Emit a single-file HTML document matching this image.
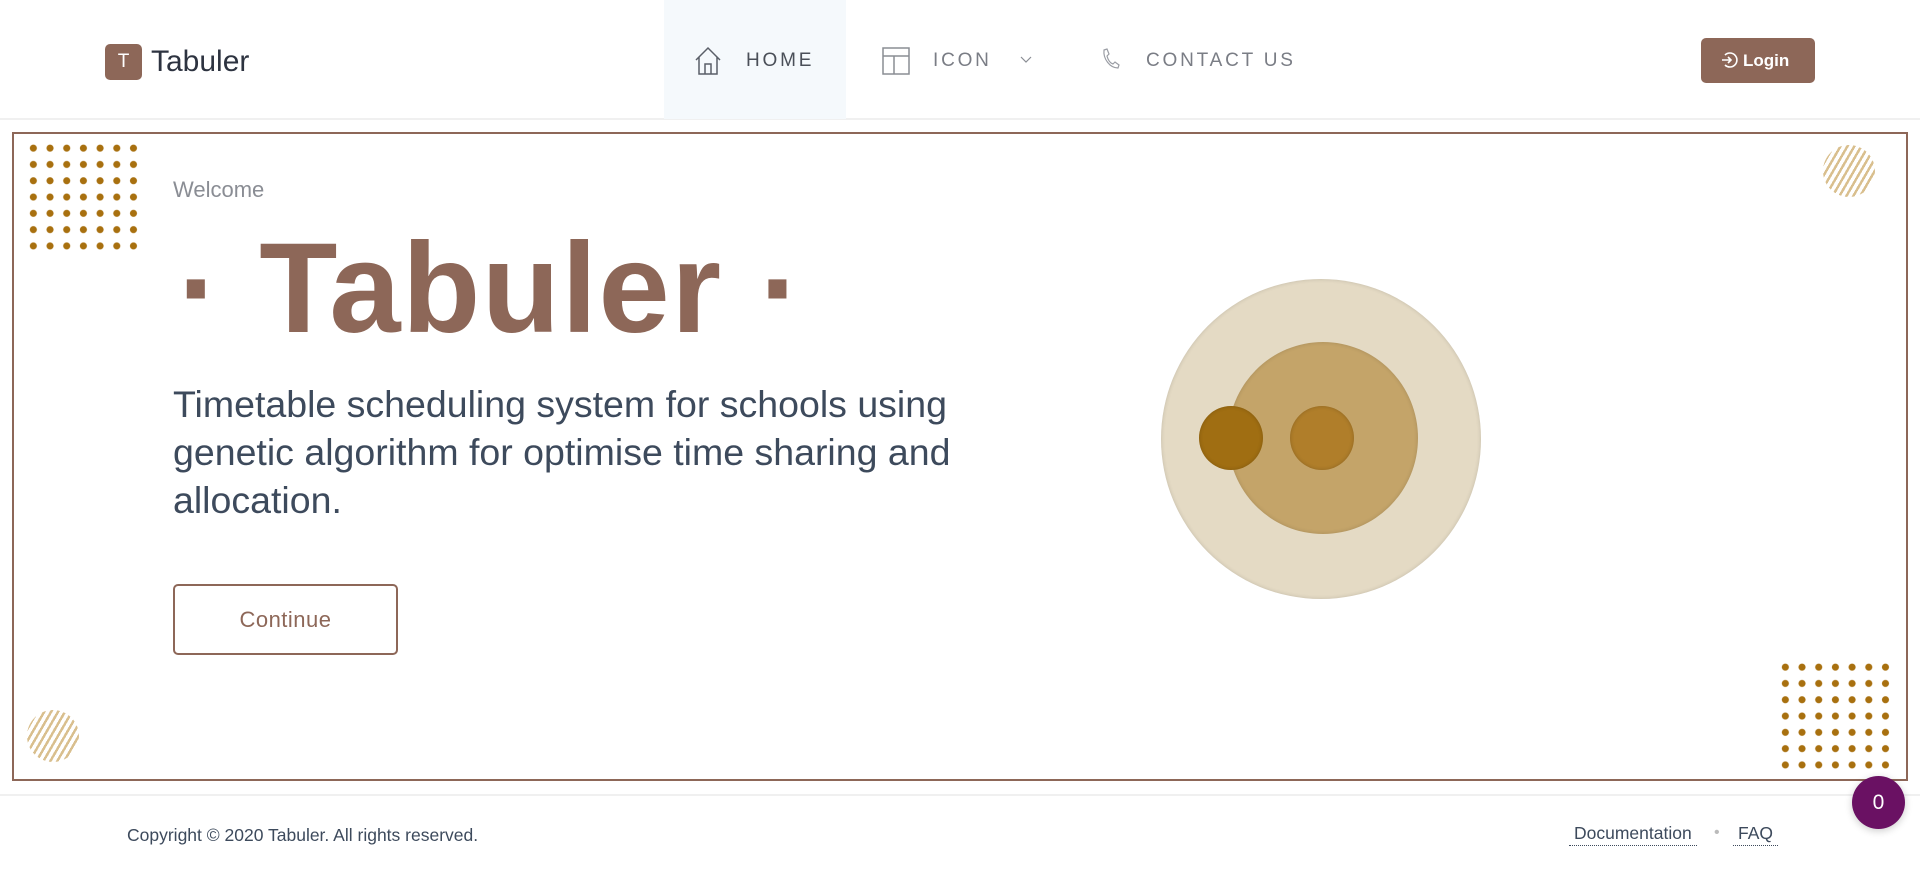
<!DOCTYPE html>
<html><head><meta charset="utf-8">
<style>
*{margin:0;padding:0;box-sizing:border-box}
body{width:1920px;height:877px;background:#fff;font-family:"Liberation Sans",sans-serif;position:relative;overflow:hidden}
.abs{position:absolute}
.hdr{left:0;top:0;width:1920px;height:120px;border-bottom:2px solid #f0f0f0}
.logo{left:105px;top:44px;width:37px;height:36px;background:#8d6758;border-radius:5px;color:#fff;font-size:19px;text-align:center;line-height:36px}
.brand{left:151px;top:44px;font-size:30px;color:#2d3340;line-height:36px}
.nav{font-size:19px;letter-spacing:2.8px;color:#7a7d85;top:49px;line-height:24px}
.home{left:664px;top:0;width:182px;height:119px;background:#f5f9fc}
.login{left:1701px;top:38px;width:114px;height:45px;background:#8d6758;border-radius:5px}
.hero{left:12px;top:132px;width:1896px;height:649px;border:2px solid #8d6758}
.dots{background-image:radial-gradient(circle,#a8700f 3.2px,transparent 3.8px);background-size:16.7px 16.3px}
.hatch{border-radius:50%;background:repeating-linear-gradient(-60deg,#d9bf8e 0 2.5px,transparent 2.5px 6px)}
.circ{border-radius:50%}
</style></head><body>
<div class="abs hdr"></div>
<div class="abs logo">T</div>
<div class="abs brand">Tabuler</div>
<div class="abs home"></div>
<svg class="abs" style="left:694px;top:46px" width="28" height="30" viewBox="0 0 28 30" fill="none" stroke="#5a5f68" stroke-width="1.5"><path d="M2 14 L14 2 L26 14 M5 11 V28 H23 V11 M11 28 V18 H17 V28"/></svg>
<div class="abs nav" style="left:746px;color:#4a4f58">HOME</div>
<svg class="abs" style="left:882px;top:47px" width="28" height="28" viewBox="0 0 28 28" fill="none" stroke="#8a8d94" stroke-width="1.5"><rect x="1" y="1" width="26" height="26"/><path d="M1 9 H27 M12 9 V27"/></svg>
<div class="abs nav" style="left:933px">ICON</div>
<svg class="abs" style="left:1020px;top:56px" width="12" height="8" viewBox="0 0 12 8" fill="none" stroke="#8a8d94" stroke-width="1.2"><path d="M1 1 L6 6 L11 1"/></svg>
<svg class="abs" style="left:1100px;top:48px" width="20" height="22" viewBox="0 0 20 22" fill="none" stroke="#9a9da4" stroke-width="1.2"><path d="M4 2 L7 1 L9 6 L7 8 C8 12 10 15 13 16 L15 14 L19 17 L18 20 C10 20 3 11 4 2Z"/></svg>
<div class="abs nav" style="left:1146px">CONTACT US</div>
<div class="abs login"></div>
<svg class="abs" style="left:1720px;top:51px" width="18" height="18" viewBox="0 0 18 18" fill="none" stroke="#fff" stroke-width="1.6"><path d="M5 4 A7 7 0 1 1 5 14"/><path d="M2 9 H11 M8 6 L11 9 L8 12"/></svg>
<div class="abs" style="left:1743px;top:38px;line-height:45px;color:#fff;font-size:17px;font-weight:bold">Login</div>

<div class="abs hero"></div>
<div class="abs dots" style="left:25px;top:140px;width:117px;height:114px"></div>
<div class="abs dots" style="left:1777px;top:659px;width:117px;height:114px"></div>
<div class="abs hatch" style="left:1823px;top:145px;width:52px;height:52px"></div>
<div class="abs hatch" style="left:27px;top:710px;width:52px;height:52px"></div>

<div class="abs" style="left:173px;top:177px;font-size:22px;color:#8a8d94">Welcome</div>
<div class="abs" style="left:178px;top:214px;font-size:128px;font-weight:bold;color:#8d6758;line-height:150px;white-space:nowrap;letter-spacing:1.5px">· Tabuler ·</div>
<div class="abs" style="left:173px;top:380px;width:800px;font-size:37.5px;line-height:48px;color:#3d4a5c">Timetable scheduling system for schools using genetic algorithm for optimise time sharing and allocation.</div>
<div class="abs" style="left:173px;top:584px;width:225px;height:71px;border:2px solid #8d6758;border-radius:5px;color:#8d6758;font-size:22px;text-align:center;line-height:67px;letter-spacing:0.5px">Continue</div>

<div class="abs circ" style="left:1161px;top:279px;width:320px;height:320px;background:#e4dac4;box-shadow:inset 0 0 4px rgba(0,0,0,.15)"></div>
<div class="abs circ" style="left:1228px;top:342px;width:190px;height:192px;background:#c4a469;box-shadow:inset 0 0 4px rgba(0,0,0,.15)"></div>
<div class="abs circ" style="left:1199px;top:406px;width:64px;height:64px;background:#a06e12;box-shadow:inset 0 0 4px rgba(0,0,0,.2)"></div>
<div class="abs circ" style="left:1290px;top:406px;width:64px;height:64px;background:#b07e2a;box-shadow:inset 0 0 4px rgba(0,0,0,.2)"></div>

<div class="abs" style="left:0;top:794px;width:1920px;height:2px;background:#f0f0f0"></div>
<div class="abs" style="left:127px;top:825px;font-size:17.5px;color:#3d4a5c">Copyright © 2020 Tabuler. All rights reserved.</div>
<div class="abs" style="left:1569px;top:823px;font-size:17.5px;color:#3d4a5c;border-bottom:1px dotted #3d4a5c;padding:0 5px 1px">Documentation</div>
<div class="abs" style="left:1714px;top:824px;font-size:16px;color:#bbb">•</div>
<div class="abs" style="left:1733px;top:823px;font-size:17.5px;color:#3d4a5c;border-bottom:1px dotted #3d4a5c;padding:0 5px 1px">FAQ</div>
<div class="abs circ" style="left:1852px;top:776px;width:53px;height:53px;background:#6a1163;color:#fff;font-size:21px;text-align:center;line-height:53px;box-shadow:0 2px 8px rgba(0,0,0,.2)">0</div>
</body></html>
